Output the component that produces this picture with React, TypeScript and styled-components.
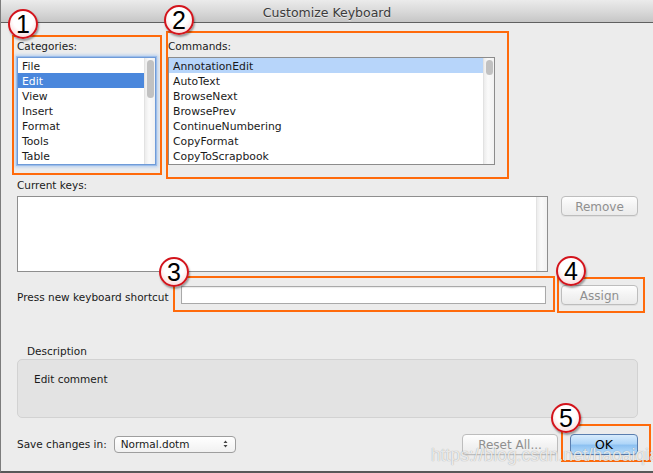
import React from 'react'
import styled, { createGlobalStyle, css } from 'styled-components'

const GlobalStyle = createGlobalStyle`
  html, body {
    margin: 0;
    padding: 0;
    background: #ececec;
  }
  * {
    box-sizing: border-box;
  }
`

const Window = styled.div`
  position: relative;
  width: 653px;
  height: 473px;
  overflow: hidden;
  background: #ececec;
  border-left: 1px solid #7c7c7c;
  border-bottom: 2px solid #585858;
  font-family: 'DejaVu Sans', 'Liberation Sans', sans-serif;
  color: #1a1a1a;
`

const TitleBar = styled.div`
  height: 23px;
  display: flex;
  align-items: center;
  justify-content: center;
  background: linear-gradient(#ebebeb, #d6d6d6 60%, #c6c6c6);
  border-bottom: 1px solid #606060;
  font-size: 12.5px;
  color: #3b3b3b;
  text-shadow: 0 1px 0 rgba(255, 255, 255, 0.5);
  padding-top: 2px;
`

const Body = styled.div`
  padding: 16px 15px 0 16px;
  display: flex;
  flex-direction: column;
`

const Label = styled.div`
  font-size: 10.5px;
  line-height: 14px;
  white-space: nowrap;
`

const TopRow = styled.div`
  display: flex;
  gap: 12px;
`

const Column = styled.div<{ $w: number }>`
  width: ${(p) => p.$w}px;
  display: flex;
  flex-direction: column;
  gap: 4px;
`

const ListBox = styled.div<{ $focus?: boolean }>`
  position: relative;
  height: 108px;
  background: #fff;
  border: 1px solid #8c8c8c;
  padding-right: 11px;
  overflow: hidden;
  ${(p) =>
    p.$focus &&
    css`
      border-color: #6f9bd8;
      box-shadow: 0 0 0 1px #9cbde9, 0 0 3px 2px #b3cdf0;
    `}
`

const Row = styled.div<{ $sel?: 'active' | 'inactive' }>`
  height: 15px;
  line-height: 15px;
  padding: 1px 0 0 4px;
  font-size: 10.8px;
  white-space: nowrap;
  ${(p) =>
    p.$sel === 'active' &&
    css`
      background: #4a87dc;
      color: #fff;
    `}
  ${(p) =>
    p.$sel === 'inactive' &&
    css`
      background: #b7d5fa;
    `}
`

const ScrollTrack = styled.div`
  position: absolute;
  top: 0;
  right: 0;
  bottom: 0;
  width: 11px;
  background: linear-gradient(90deg, #ececec, #fafafa 40%, #f2f2f2);
  border-left: 1px solid #e2e2e2;
`

const Thumb = styled.div<{ $h: number }>`
  margin: 2px 0 0 2px;
  width: 7px;
  height: ${(p) => p.$h}px;
  border-radius: 4px;
  background: #c1c1c1;
`

const KeysRow = styled.div`
  display: flex;
  align-items: flex-start;
  gap: 13px;
`

const KeysBox = styled.div`
  position: relative;
  width: 531px;
  height: 76px;
  background: #fff;
  border: 1px solid #8e8e8e;
`

const Button = styled.button<{ $w: number; $h?: number; $primary?: boolean }>`
  width: ${(p) => p.$w}px;
  height: ${(p) => p.$h ?? 20}px;
  padding: 1px 0 0;
  border-radius: 4px;
  border: 1px solid #bdbdbd;
  background: linear-gradient(#fefefe, #f3f3f3 50%, #ebebeb);
  font-family: 'DejaVu Sans', sans-serif;
  font-size: 12px;
  color: #8f8f8f;
  box-shadow: 0 1px 0 rgba(0, 0, 0, 0.05);
  ${(p) =>
    p.$primary &&
    css`
      border-color: #5a7eaf;
      background: linear-gradient(#d8ecfd, #b0d6f8 45%, #8dc1f1 55%, #b9defc);
      color: #000;
      font-size: 12.5px;
    `}
`

const ShortcutRow = styled.div`
  display: flex;
  align-items: center;
  margin-top: 13px;
  height: 20px;
`

const ShortcutLabel = styled(Label)`
  width: 164px;
  padding-top: 3px;
`

const TextInput = styled.div`
  width: 365px;
  height: 18px;
  margin-right: 15px;
  background: #fff;
  border: 1px solid #a9a9a9;
  box-shadow: inset 0 1px 1px rgba(0, 0, 0, 0.08);
`

const DescLabel = styled(Label)`
  margin: 39px 0 1px 10px;
`

const DescBox = styled.div`
  width: 621px;
  height: 59px;
  border-radius: 5px;
  border: 1px solid #d2d2d2;
  background: #e3e3e3;
  padding: 12px 16px;
  font-size: 10.5px;
  line-height: 14px;
`

const BottomRow = styled.div`
  display: flex;
  align-items: center;
  margin-top: 15px;
  height: 22px;
`

const Select = styled.div`
  display: flex;
  align-items: center;
  justify-content: space-between;
  width: 122px;
  height: 17px;
  margin-left: 7px;
  padding: 0 7px 0 6px;
  border: 1px solid #9e9e9e;
  border-radius: 4px;
  background: linear-gradient(#ffffff, #f1f1f1);
  font-size: 10.5px;
`

const Spacer = styled.div`
  flex: 1;
`

const Frame = styled.div<{ $x: number; $y: number; $w: number; $h: number }>`
  position: absolute;
  left: ${(p) => p.$x}px;
  top: ${(p) => p.$y}px;
  width: ${(p) => p.$w}px;
  height: ${(p) => p.$h}px;
  border: 2px solid #ff6a0b;
  pointer-events: none;
`

const Badge = styled.div<{ $x: number; $y: number }>`
  position: absolute;
  left: ${(p) => p.$x - 15}px;
  top: ${(p) => p.$y - 15}px;
  width: 30px;
  height: 30px;
  border-radius: 50%;
  border: 2px solid #d3141c;
  background: radial-gradient(circle at 50% 35%, #ffffff 45%, #fbe3e3 75%, #f0b4b4 100%);
  box-shadow: 1px 2px 2px rgba(0, 0, 0, 0.35);
  display: flex;
  align-items: center;
  justify-content: center;
  font-family: 'Liberation Sans', Arial, sans-serif;
  font-size: 25px;
  line-height: 1;
  color: #000;
  padding-top: 1px;
`

const Watermark = styled.div`
  position: absolute;
  left: 430px;
  top: 445px;
  font-family: 'Liberation Sans', Arial, sans-serif;
  font-size: 17.5px;
  color: rgba(255, 255, 255, 0.8);
  text-shadow: 0 0 1px rgba(0, 0, 0, 0.4);
  white-space: nowrap;
  pointer-events: none;
`

const categories = ['File', 'Edit', 'View', 'Insert', 'Format', 'Tools', 'Table']
const commands = [
  'AnnotationEdit',
  'AutoText',
  'BrowseNext',
  'BrowsePrev',
  'ContinueNumbering',
  'CopyFormat',
  'CopyToScrapbook',
]

const SelectArrows = () => (
  <svg width="5" height="8" viewBox="0 0 5 8">
    <path d="M2.5 0.5 L4.5 3 H0.5 Z M2.5 7.5 L4.5 5 H0.5 Z" fill="#444" />
  </svg>
)

const App = () => (
  <>
    <GlobalStyle />
    <Window>
      <TitleBar>Customize Keyboard</TitleBar>
      <Body>
        <TopRow>
          <Column $w={139}>
            <Label>Categories:</Label>
            <ListBox $focus>
              {categories.map((c) => (
                <Row key={c} $sel={c === 'Edit' ? 'active' : undefined}>
                  {c}
                </Row>
              ))}
              <ScrollTrack>
                <Thumb $h={38} />
              </ScrollTrack>
            </ListBox>
          </Column>
          <Column $w={327}>
            <Label>Commands:</Label>
            <ListBox>
              {commands.map((c, i) => (
                <Row key={c} $sel={i === 0 ? 'inactive' : undefined}>
                  {c}
                </Row>
              ))}
              <ScrollTrack>
                <Thumb $h={15} />
              </ScrollTrack>
            </ListBox>
          </Column>
        </TopRow>

        <Column $w={621} style={{ marginTop: 13 }}>
          <Label>Current keys:</Label>
          <KeysRow>
            <KeysBox>
              <ScrollTrack />
            </KeysBox>
            <Button $w={77}>Remove</Button>
          </KeysRow>
        </Column>

        <ShortcutRow>
          <ShortcutLabel>Press new keyboard shortcut</ShortcutLabel>
          <TextInput />
          <Button $w={77}>Assign</Button>
        </ShortcutRow>

        <DescLabel>Description</DescLabel>
        <DescBox>Edit comment</DescBox>

        <BottomRow>
          <Label>Save changes in:</Label>
          <Select>
            <span>Normal.dotm</span>
            <SelectArrows />
          </Select>
          <Spacer />
          <Button $w={96} $h={21}>
            Reset All...
          </Button>
          <Button $w={68} $h={21} $primary style={{ marginLeft: 12 }}>
            OK
          </Button>
        </BottomRow>
      </Body>

      <Frame $x={11} $y={35} $w={150} $h={140} />
      <Frame $x={165} $y={31} $w={343} $h={148} />
      <Frame $x={172} $y={276} $w={382} $h={36} />
      <Frame $x={556} $y={277} $w={88} $h={36} />
      <Frame $x={560} $y={424} $w={90} $h={38} />

      <Badge $x={22} $y={24}>1</Badge>
      <Badge $x={178} $y={20}>2</Badge>
      <Badge $x={173} $y={272}>3</Badge>
      <Badge $x={570} $y={271}>4</Badge>
      <Badge $x={565} $y={418}>5</Badge>

      <Watermark>https://blog.csdn.net/haoaiqian</Watermark>
    </Window>
  </>
)

export default App
